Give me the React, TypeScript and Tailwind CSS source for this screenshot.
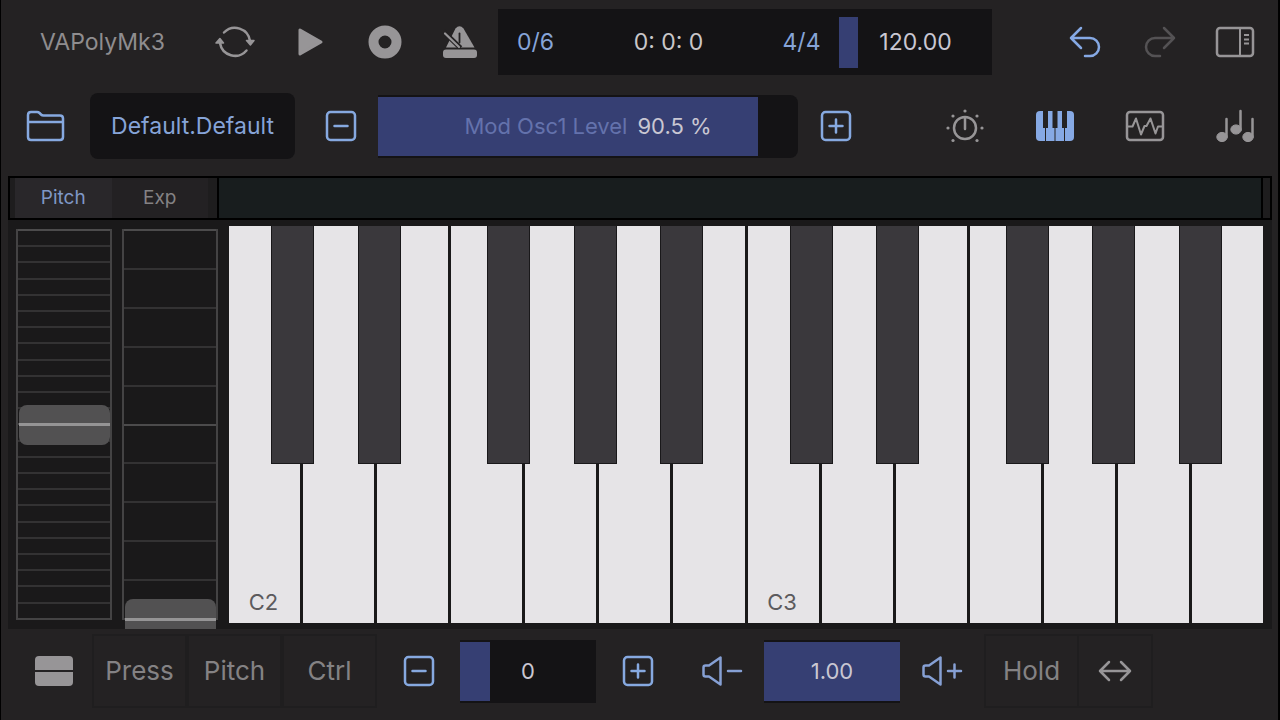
import { useState } from 'react'
import type { ReactNode } from 'react'

const WHITE_KEYS = ['C2', 'D2', 'E2', 'F2', 'G2', 'A2', 'B2', 'C3', 'D3', 'E3', 'F3', 'G3', 'A3', 'B3']

const BLACK_KEYS = [
  { note: 'C#2', col: 'col-start-2' },
  { note: 'D#2', col: 'col-start-4' },
  { note: 'F#2', col: 'col-start-7' },
  { note: 'G#2', col: 'col-start-9' },
  { note: 'A#2', col: 'col-start-11' },
  { note: 'C#3', col: 'col-start-14' },
  { note: 'D#3', col: 'col-start-16' },
  { note: 'F#3', col: 'col-start-19' },
  { note: 'G#3', col: 'col-start-21' },
  { note: 'A#3', col: 'col-start-23' },
]

export default function App() {
  const [tempo, setTempo] = useState(120)
  const [level, setLevel] = useState(90.5)
  const [octave, setOctave] = useState(0)
  const [volume, setVolume] = useState(1)
  const [bend, setBend] = useState(50)
  const [exp, setExp] = useState(0)

  return (
    <div className="min-h-screen flex flex-col bg-[#242223] border-l border-r-2 border-black pl-[7px] pr-[6px] font-[Inter,sans-serif] text-[22px] leading-7 text-[#8f8d8f] select-none">
      <header className="h-21 flex items-center text-[23px]">
        <h1 className="w-[189px] text-center">VAPolyMk3</h1>
        <IconButton label="Loop"><LoopIcon /></IconButton>
        <IconButton label="Play"><PlayIcon /></IconButton>
        <IconButton label="Record"><RecordIcon /></IconButton>
        <IconButton label="Metronome"><MetronomeIcon /></IconButton>

        <div className="flex-1 h-[66px] ml-px mr-[55px] flex items-center bg-[#141315] text-[#c9c7c9]">
          <button className="w-[75px] text-[#86a4d8]">0/6</button>
          <div className="flex-1 text-center">0: 0: 0</div>
          <button className="w-[75px] text-[#86a4d8]">4/4</button>
          <div className="w-[153px] h-[51px]">
            <ParamSlider label="Tempo" min={60} max={540} step={1} value={tempo} onChange={setTempo}>
              {tempo.toFixed(2)}
            </ParamSlider>
          </div>
        </div>

        <IconButton label="Undo"><UndoIcon /></IconButton>
        <IconButton label="Redo"><RedoIcon /></IconButton>
        <IconButton label="Side panel"><PanelIcon /></IconButton>
      </header>

      <div className="h-21 flex items-center">
        <IconButton label="Open preset"><FolderIcon /></IconButton>
        <button className="w-[205px] h-[66px] ml-[7px] mr-2 rounded-lg bg-[#141315] text-[23px] text-[#86a4d8]">
          Default.Default
        </button>
        <IconButton label="Decrease value"><MinusBoxIcon /></IconButton>
        <div className="flex-1 h-[63px] py-[2px] rounded-r-lg bg-[#141315]">
          <ParamSlider label="Mod Osc1 Level" min={0} max={100} step={0.5} value={level} onChange={setLevel}>
            <span className="text-[#6472ac]">Mod Osc1 Level</span>
            <span className="ml-[10px]">{level.toFixed(1)} %</span>
          </ParamSlider>
        </div>
        <IconButton label="Increase value"><PlusBoxIcon /></IconButton>
        <nav className="ml-[54px] flex gap-[15px]">
          <IconButton label="Controls"><KnobIcon /></IconButton>
          <IconButton label="Keyboard"><PianoIcon /></IconButton>
          <IconButton label="Scope"><ScopeIcon /></IconButton>
          <IconButton label="Sequencer"><NotesIcon /></IconButton>
        </nav>
      </div>

      <div className="h-11 mt-2 flex border-2 border-black bg-[#1e1d1e] text-[19px]">
        <div className="w-[207px] pl-[5px] pr-[9px] flex">
          <button className="flex-1 bg-[#29272a] text-[#7f97c6]">Pitch</button>
          <button className="flex-1 bg-[#232123] text-[#848284]">Exp</button>
        </div>
        <div className="flex-1 border-x-2 border-black bg-[#181d1e]" />
        <div className="w-[7px]" />
      </div>

      <main className="flex-1 flex py-[6px] pl-2 pr-[9px] bg-[#1a191a] overflow-hidden">
        <Wheel label="Pitch bend" divisions={24} value={bend} onChange={setBend} />
        <div className="w-[10px]" />
        <Wheel label="Expression" divisions={10} value={exp} onChange={setExp} />
        <Keyboard />
      </main>

      <footer className="h-[91px] pb-[7px] pl-2 flex items-center">
        <button aria-label="Keyboard rows" className="w-[76px] grid place-items-center"><RowsIcon /></button>
        <PadButton>Press</PadButton>
        <PadButton>Pitch</PadButton>
        <PadButton>Ctrl</PadButton>
        <button aria-label="Octave down" className="w-[83px] grid place-items-center"><MinusBoxIcon /></button>
        <div className="w-34 h-[63px] py-[2px] bg-[#141315]">
          <ParamSlider label="Octave" min={-2} max={7} step={1} value={octave} onChange={setOctave}>{octave}</ParamSlider>
        </div>
        <button aria-label="Octave up" className="w-21 grid place-items-center"><PlusBoxIcon /></button>
        <button aria-label="Volume down" className="w-21 grid place-items-center"><VolumeIcon /></button>
        <div className="w-34 h-[63px] py-[2px] bg-[#141315]">
          <ParamSlider label="Volume" min={0} max={1} step={0.01} value={volume} onChange={setVolume}>
            {volume.toFixed(2)}
          </ParamSlider>
        </div>
        <button aria-label="Volume up" className="w-21 grid place-items-center"><VolumeIcon up /></button>
        <PadButton>Hold</PadButton>
        <button aria-label="Scroll keys" className="w-[74px] h-[74px] grid place-items-center border-2 border-l-0 border-[#1f1e1f]">
          <ArrowsIcon />
        </button>
      </footer>
    </div>
  )
}

function IconButton({ label, children }: { label: string; children: ReactNode }) {
  return (
    <button aria-label={label} className="w-[75px] h-[60px] grid place-items-center">
      {children}
    </button>
  )
}

function PadButton({ children }: { children: ReactNode }) {
  return (
    <button className="w-[95px] h-[74px] border-2 border-[#1f1e1f] text-[26px] text-[#848284]">{children}</button>
  )
}

type SliderProps = {
  label: string
  min: number
  max: number
  step: number
  value: number
  onChange: (value: number) => void
  children: ReactNode
}

function ParamSlider({ label, min, max, step, value, onChange, children }: SliderProps) {
  const width = ((value - min) / (max - min)) * 100

  return (
    <label className="relative h-full flex items-center justify-center text-[#c9c7d2]">
      <span className="absolute inset-y-0 left-0 bg-[#363f73]" style={{ width: `${width}%` }} />
      <span className="relative">{children}</span>
      <input
        type="range"
        aria-label={label}
        min={min}
        max={max}
        step={step}
        value={value}
        onChange={(e) => onChange(Number(e.target.value))}
        className="absolute inset-0 w-full h-full opacity-0"
      />
    </label>
  )
}

type WheelProps = {
  label: string
  divisions: number
  value: number
  onChange: (value: number) => void
}

function Wheel({ label, divisions, value, onChange }: WheelProps) {
  return (
    <label className="relative w-24 mt-[3px] mb-[3px] flex flex-col border-x-2 border-b-2 border-[#444344]">
      {Array.from({ length: divisions }, (_, i) => (
        <span
          key={i}
          className={i === 0 || i === divisions / 2 ? 'flex-1 border-t-2 border-[#4c4b4c]' : 'flex-1 border-t-2 border-[#333233]'}
        />
      ))}
      <span
        className="absolute left-px right-0 h-10 -mt-[19px] rounded-lg bg-[#525152] flex items-center"
        style={{ top: `${100 - value}%` }}
      >
        <span className="w-full h-[3px] bg-[#959495]" />
      </span>
      <input
        type="range"
        aria-label={label}
        value={value}
        onChange={(e) => onChange(Number(e.target.value))}
        className="absolute inset-0 w-full h-full opacity-0 [writing-mode:vertical-lr] [direction:rtl]"
      />
    </label>
  )
}

function Keyboard() {
  return (
    <div className="relative flex-1 ml-[11px]">
      <div className="h-full flex gap-[3px]">
        {WHITE_KEYS.map((note) => (
          <button
            key={note}
            aria-label={note}
            className="flex-1 flex items-end justify-center pr-[2px] pb-[7px] bg-[#e6e4e7] text-[#5c5a5d]"
          >
            {note.startsWith('C') && note}
          </button>
        ))}
      </div>
      <div className="absolute -left-px -right-0.5 top-0 h-3/5 grid grid-cols-24 pointer-events-none">
        {BLACK_KEYS.map(({ note, col }) => (
          <button
            key={note}
            aria-label={note}
            className={`${col} row-start-1 pointer-events-auto border border-t-0 border-[#19181a] bg-[#3a383c]`}
          />
        ))}
      </div>
    </div>
  )
}

function LoopIcon() {
  return (
    <svg width="40" height="36" viewBox="0 0 40 36" fill="none" stroke="#979597" strokeWidth="2.5" strokeLinecap="round" strokeLinejoin="round">
      <path d="M9 8.5A15.2 15.2 0 0 1 35 17M31.5 26.5A15.2 15.2 0 0 1 5 19" />
      <path d="M31.5 16.5h7.5l-3.6 4.5zM1 19h7.5L4.9 14.5z" fill="#979597" strokeWidth="1.5" />
    </svg>
  )
}

function PlayIcon() {
  return (
    <svg width="28" height="30" viewBox="0 0 28 30" fill="#979597" stroke="#979597" strokeWidth="3" strokeLinejoin="round">
      <path d="M4 3v24l21-12z" />
    </svg>
  )
}

function RecordIcon() {
  return (
    <svg width="34" height="34" viewBox="0 0 34 34" fill="none" stroke="#979597" strokeWidth="10">
      <circle cx="17" cy="17" r="11.5" />
    </svg>
  )
}

function MetronomeIcon() {
  return (
    <svg width="36" height="34" viewBox="0 0 36 34">
      <path d="M13.5 3.5Q17.5-1 21.5 3.5L32.5 22.5H4z" fill="#979597" />
      <path d="M17.500 8.500v9" stroke="#242223" strokeWidth="1.800" strokeLinecap="round" />
      <path d="M1 6L18.500 23" stroke="#242223" strokeWidth="5" />
      <path d="M3 8.500L17 22" stroke="#979597" strokeWidth="2.200" strokeLinecap="round" />
      <rect x="1" y="24.500" width="34" height="8.500" rx="3" fill="#979597" />
    </svg>
  )
}

function UndoIcon() {
  return (
    <svg width="32" height="32" viewBox="0 0 32 32" fill="none" stroke="#86a9e4" strokeWidth="2.5" strokeLinecap="round" strokeLinejoin="round">
      <path d="M12 2L2 12l10 10M2 12h19a9 9 0 0 1 0 18h-5" />
    </svg>
  )
}

function RedoIcon() {
  return (
    <svg width="32" height="32" viewBox="0 0 32 32" fill="none" stroke="#545254" strokeWidth="2.5" strokeLinecap="round" strokeLinejoin="round">
      <path d="M20 2l10 10-10 10M30 12H11a9 9 0 0 0 0 18h5" />
    </svg>
  )
}

function PanelIcon() {
  return (
    <svg width="40" height="32" viewBox="0 0 40 32" fill="none" stroke="#979597" strokeWidth="2.5">
      <rect x="2" y="2" width="36" height="28" rx="3" />
      <path d="M25 2v28M29 9h5M29 13.5h5M29 17.5h5" strokeWidth="2" />
    </svg>
  )
}

function FolderIcon() {
  return (
    <svg width="40" height="32" viewBox="0 0 40 32" fill="none" stroke="#86a9e0" strokeWidth="2.5" strokeLinejoin="round">
      <path d="M2 27V5q0-3 3-3h6q1.5 0 2.5 1l1.5 1.5q1 1 2.5 1H34q3 0 3 3V27q0 3-3 3H5q-3 0-3-3zM2 12h35" />
    </svg>
  )
}

function MinusBoxIcon() {
  return (
    <svg width="32" height="32" viewBox="0 0 32 32" fill="none" stroke="#86a9e0" strokeWidth="2.5" strokeLinecap="round">
      <rect x="2" y="2" width="28" height="28" rx="3.5" />
      <path d="M9.5 16h13" />
    </svg>
  )
}

function PlusBoxIcon() {
  return (
    <svg width="32" height="32" viewBox="0 0 32 32" fill="none" stroke="#86a9e0" strokeWidth="2.5" strokeLinecap="round">
      <rect x="2" y="2" width="28" height="28" rx="3.5" />
      <path d="M9.5 16h13M16 9.5v13" />
    </svg>
  )
}

function KnobIcon() {
  return (
    <svg width="40" height="36" viewBox="0 0 40 36" fill="#979597">
      <circle cx="20" cy="20" r="11" fill="none" stroke="#979597" strokeWidth="2.5" />
      <path d="M20 10v11" stroke="#979597" strokeWidth="2.5" strokeLinecap="round" />
      <circle cx="20" cy="3" r="1.6" />
      <circle cx="8" cy="8" r="1.6" />
      <circle cx="32" cy="8" r="1.6" />
      <circle cx="3" cy="20" r="1.6" />
      <circle cx="37" cy="20" r="1.6" />
      <circle cx="8" cy="32.5" r="1.6" />
      <circle cx="32" cy="32.5" r="1.6" />
    </svg>
  )
}

function PianoIcon() {
  return (
    <svg width="38" height="30" viewBox="0 0 38 30">
      <rect width="38" height="30" rx="4" fill="#86a9e4" />
      <path d="M7 0h5v17H7zM16.500 0h5v17h-5zM26 0h5v17h-5z" fill="#242223" />
      <path d="M9.500 16v14M19 16v14M28.500 16v14" stroke="#242223" strokeWidth="1" />
    </svg>
  )
}

function ScopeIcon() {
  return (
    <svg width="40" height="32" viewBox="0 0 40 32" fill="none" stroke="#979597" strokeLinejoin="round">
      <rect x="2" y="2" width="36" height="28" rx="3" strokeWidth="2.5" />
      <path d="M3 16.5h4.500l3.500-8 5 16 3.500-8.500h2l4-7.500 5 15 2.500-7h4" strokeWidth="2" />
    </svg>
  )
}

function NotesIcon() {
  return (
    <svg width="40" height="34" viewBox="0 0 40 34" fill="#979597" stroke="#979597">
      <path d="M11.5 10v18M25.5 2v19M37.5 10v18" strokeWidth="2.500" strokeLinecap="round" />
      <ellipse cx="7" cy="28" rx="5.2" ry="4.6" />
      <ellipse cx="21" cy="20.5" rx="5.2" ry="4.6" />
      <ellipse cx="33" cy="28" rx="5.2" ry="4.6" />
    </svg>
  )
}

function RowsIcon() {
  return (
    <svg width="38" height="30" viewBox="0 0 38 30">
      <rect width="38" height="30" rx="4" fill="#979597" />
      <path d="M0 15h38" stroke="#242223" strokeWidth="2" />
    </svg>
  )
}

function VolumeIcon({ up }: { up?: boolean }) {
  return (
    <svg width="42" height="32" viewBox="0 0 42 32" fill="none" stroke="#86a0d4" strokeWidth="2.5" strokeLinecap="round" strokeLinejoin="round">
      <path d="M4.5 10.5H8L19.5 2.5v27L8 21.5H4.5q-2 0-2-2v-7q0-2 2-2z" />
      <path d={up ? 'M27 16h13M33.5 9.5v13' : 'M27 16h13'} />
    </svg>
  )
}

function ArrowsIcon() {
  return (
    <svg width="34" height="22" viewBox="0 0 34 22" fill="none" stroke="#979597" strokeWidth="2.5" strokeLinecap="round" strokeLinejoin="round">
      <path d="M11 2L2 11l9 9M23 2l9 9-9 9M2 11h30" />
    </svg>
  )
}
